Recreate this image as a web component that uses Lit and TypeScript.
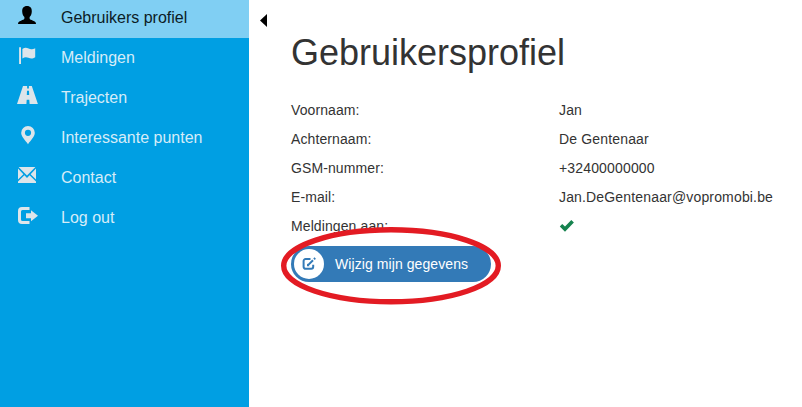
import { LitElement, html, svg, css } from "lit";
import { customElement } from "lit/decorators.js";

const icons = {
  user: svg`<path d="M11 0C7.6 0 6 2.2 6.2 5.6C6.3 8.2 7 9.8 8.4 11V12.6C8.2 13.6 6.8 14 5 14.7C3 15.5 2 16 2 18H20C20 16 19 15.5 17 14.7C15.2 14 13.8 13.6 13.6 12.6V11C15 9.8 15.7 8.2 15.8 5.6C16 2.2 14.4 0 11 0Z"/>`,
  flag: svg`<path d="M3.1 1.2H5V18H3.1ZM6.4 3C8.6 1.2 10.6 1.4 12.6 2.6C14.8 3.9 16.6 3.4 19.2 2.2V11.2C16.8 13 14.6 12.8 12.4 11.8C10.4 10.9 8.6 11 6.4 12.4Z"/>`,
  road: svg`<path d="M7 0H11.1V2.6H12.9V0H15.8L21.9 18H13.6L13.3 13.8H10.7L10.4 18H1ZM11 4.8L10.8 9H13.2L13 4.8Z" fill-rule="evenodd"/>`,
  pin: svg`<path d="M12 0A6.8 6.8 0 0 0 5.2 6.8C5.2 10.6 9 14 12 18.2C15 14 18.8 10.6 18.8 6.8A6.8 6.8 0 0 0 12 0ZM12 3.7A3.1 3.1 0 1 1 12 9.9A3.1 3.1 0 1 1 12 3.7Z" fill-rule="evenodd"/>`,
  mail: svg`<path d="M2.6 1H19.4L11 9.6ZM2 2.4L7.4 8.2L2 13.6ZM20 2.4V13.6L14.6 8.2ZM8.4 9.3L11 12L13.6 9.3L20 15.6V17H2V15.6Z"/>`,
  logout: svg`<path d="M13.5 1H6A4 4 0 0 0 2 5V14A4 4 0 0 0 6 18H13.5V15H6.5A1.5 1.5 0 0 1 5 13.5V5.6A1.5 1.5 0 0 1 6.5 4.1H13.5ZM15 4.3L22 9.8L15 15.2V12.2H10V7.2H15Z"/>`,
};

const menu: { icon: keyof typeof icons; label: string; active?: boolean }[] = [
  { icon: "user", label: "Gebruikers profiel", active: true },
  { icon: "flag", label: "Meldingen" },
  { icon: "road", label: "Trajecten" },
  { icon: "pin", label: "Interessante punten" },
  { icon: "mail", label: "Contact" },
  { icon: "logout", label: "Log out" },
];

const check = html`<svg class="check" viewBox="0 0 15 14"><path d="M.8 7.4L3.2 4.9L6 7.5L12.3 1L14.9 3.4L6 12.7Z" /></svg>`;

const fields = [
  ["Voornaam:", "Jan"],
  ["Achternaam:", "De Gentenaar"],
  ["GSM-nummer:", "+32400000000"],
  ["E-mail:", "Jan.DeGentenaar@vopromobi.be"],
  ["Meldingen aan:", check],
];

@customElement("app-root")
export class AppRoot extends LitElement {
  static styles = css`
    :host {
      display: flex;
      height: 407px;
      overflow: hidden;
      background: #fff;
      color: #333;
      font: 14px/20px "Liberation Sans", Arial, sans-serif;
    }
    .sidebar {
      flex: none;
      width: 249px;
      background: #009fe3;
    }
    .item {
      display: flex;
      align-items: center;
      gap: 21px;
      height: 40px;
      padding-left: 16px;
      box-sizing: border-box;
      font-size: 16px;
      color: #d5ecf8;
    }
    .item.active {
      height: 38px;
      padding-bottom: 2px;
      background: #80cff3;
      color: #0c1c26;
    }
    .item svg {
      width: 24px;
      height: 24px;
      fill: #dde5ea;
    }
    .item.active svg {
      fill: #000;
    }
    .main {
      position: relative;
      flex: 1;
      display: flex;
      align-items: flex-start;
    }
    .collapse {
      width: 7px;
      height: 13px;
      margin: 14px 24px 0 11px;
    }
    .profile {
      flex: 1;
      padding-top: 33px;
    }
    h1 {
      margin: 0 0 27px;
      font-size: 36px;
      line-height: 40px;
      font-weight: 400;
    }
    dl {
      display: grid;
      grid-template-columns: 268px 1fr;
      grid-auto-rows: 20px;
      row-gap: 9px;
      margin: 0 0 10px;
      letter-spacing: 0.16px;
    }
    dt {
      letter-spacing: 0.1px;
    }
    dd {
      margin: 0;
    }
    .check {
      display: block;
      width: 15px;
      height: 14px;
      margin-top: 3px;
      fill: #16834f;
    }
    .edit {
      display: flex;
      align-items: center;
      gap: 11px;
      width: 200px;
      height: 36px;
      padding: 0 0 0 3px;
      border: 0;
      border-radius: 18px;
      background: #337ab7;
      color: #fff;
      font: inherit;
      letter-spacing: 0.08px;
    }
    .badge {
      display: flex;
      align-items: center;
      justify-content: center;
      width: 30px;
      height: 30px;
      border-radius: 50%;
      background: #fff;
    }
    .ring {
      position: absolute;
      left: 31px;
      top: 226px;
      width: 222px;
      height: 80px;
    }
  `;

  render() {
    return html`
      <nav class="sidebar">
        ${menu.map(
          (m) => html`<div class="item ${m.active ? "active" : ""}">
            <svg viewBox="0 0 24 24">${icons[m.icon]}</svg><span>${m.label}</span>
          </div>`
        )}
      </nav>
      <main class="main">
        <svg class="collapse" viewBox="0 0 7 13"><path d="M7 0V13L0 6.5Z" /></svg>
        <section class="profile">
          <h1>Gebruikersprofiel</h1>
          <dl>${fields.map(([k, v]) => html`<dt>${k}</dt><dd>${v}</dd>`)}</dl>
          <button class="edit">
            <span class="badge">
              <svg width="14" height="14" viewBox="0 0 14 14" fill="none" stroke="#337ab7" stroke-width="2">
                <path d="M8.5 2H3.6A2 2 0 0 0 1.6 4V9.8A2 2 0 0 0 3.6 11.8H9.2A2 2 0 0 0 11.2 9.8V7.8" />
                <path d="M5.8 8.4L11 3.2M12 2.2L13.2 1" />
                <path d="M5 6.6V9.2H7.6Z" fill="#337ab7" stroke="none" />
              </svg>
            </span>
            <span>Wijzig mijn gegevens</span>
          </button>
        </section>
        <svg class="ring" viewBox="0 0 222 80">
          <ellipse cx="111" cy="39.8" rx="107.3" ry="36" fill="none" stroke="#e31b23" stroke-width="5.4" />
        </svg>
      </main>
    `;
  }
}
